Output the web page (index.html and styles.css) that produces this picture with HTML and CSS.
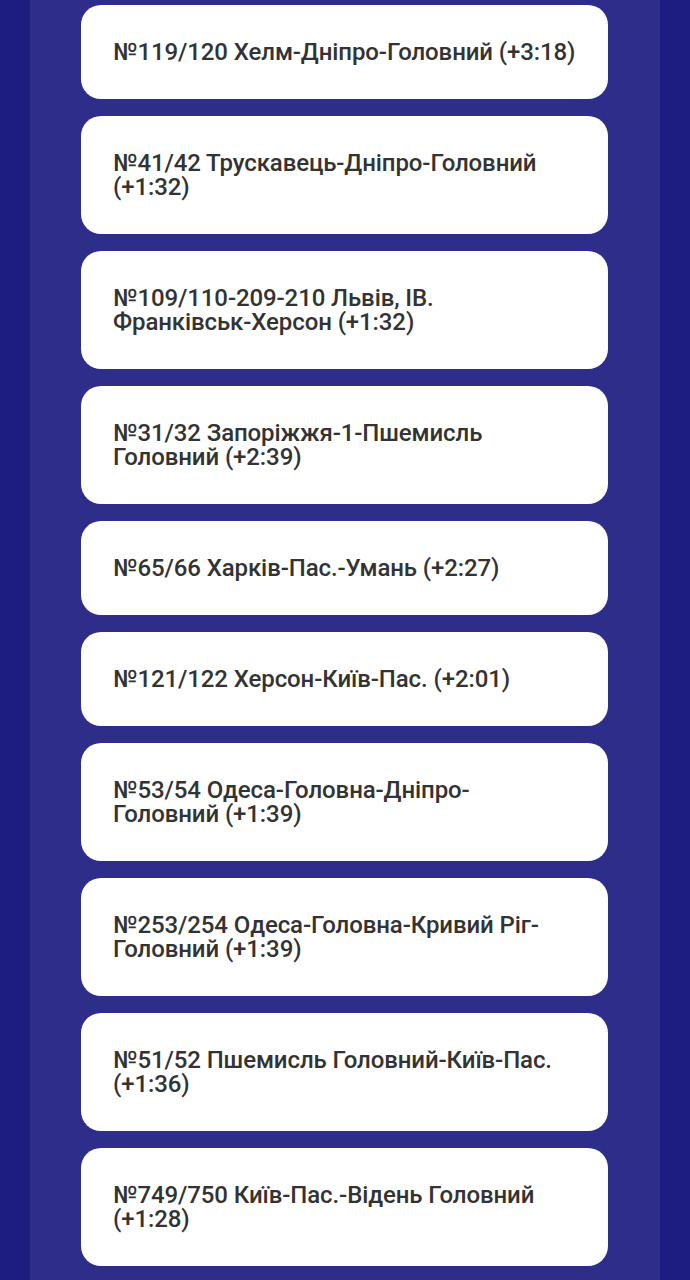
FILE: index.html
```html
<!DOCTYPE html>
<html lang="uk">
<head>
    <meta charset="UTF-8">
    <meta name="viewport" content="width=device-width, initial-scale=1.0">
    <title>Затримки поїздів</title>
    <link rel="stylesheet" href="styles.css">
</head>
<body>
    <div class="panel">
        <!-- Train delay list -->
        <div class="train">№119/120 Хелм-Дніпро-Головний (+3:18)</div>
        <div class="train">№41/42 Трускавець-Дніпро-Головний<br>(+1:32)</div>
        <div class="train">№109/110-209-210 Львів, ІВ.<br>Франківськ-Херсон (+1:32)</div>
        <div class="train">№31/32 Запоріжжя-1-Пшемисль<br>Головний (+2:39)</div>
        <div class="train">№65/66 Харків-Пас.-Умань (+2:27)</div>
        <div class="train">№121/122 Херсон-Київ-Пас. (+2:01)</div>
        <div class="train">№53/54 Одеса-Головна-Дніпро-<br>Головний (+1:39)</div>
        <div class="train">№253/254 Одеса-Головна-Кривий Ріг-<br>Головний (+1:39)</div>
        <div class="train">№51/52 Пшемисль Головний-Київ-Пас.<br>(+1:36)</div>
        <div class="train">№749/750 Київ-Пас.-Відень Головний<br>(+1:28)</div>
    </div>
</body>
</html>
```

FILE: styles.css
```css
* { margin: 0; padding: 0; box-sizing: border-box; }
body {
    background: #1d1c80;
    min-height: 100vh;
    padding: 0 30px 0 30px;
    font-family: Roboto, "Noto Sans", sans-serif;
    color: #333;
}
.panel {
    background: #2f2d8a;
    min-height: 1280px;
    padding: 5px 52px 20px 51px;
    display: flex;
    flex-direction: column;
    gap: 17px;
}
.train {
    background: #fff;
    border-radius: 20px;
    padding: 35px 20px 35px 32px;
    font-size: 24px;
    font-weight: 500;
    line-height: 24px;
    letter-spacing: -0.1px;
}
```
